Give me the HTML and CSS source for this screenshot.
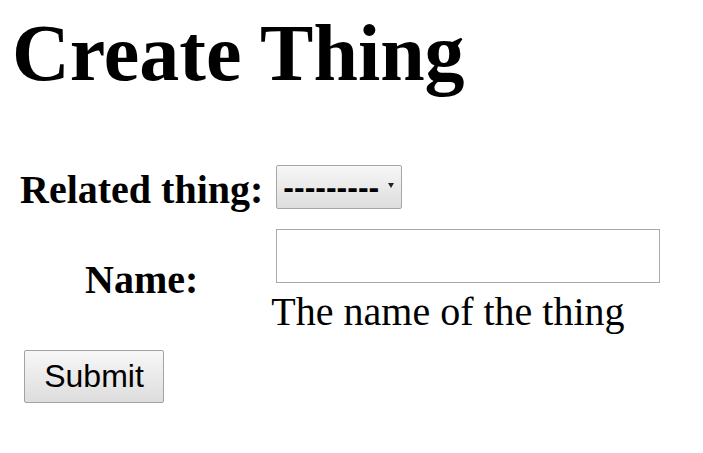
FILE: index.html
```html
<!DOCTYPE html>
<html>
<head>
<meta charset="utf-8">
<title>Create Thing</title>
<link rel="stylesheet" href="styles.css">
</head>
<body>
<h1 class="title">Create Thing</h1>
<form class="form">
  <table class="fields">
    <tr class="row row-related">
      <th class="label-cell"><label for="id_related">Related thing:</label></th>
      <td class="field-cell">
        <span class="select-wrap">
          <select id="id_related" class="select">
            <option>---------</option>
          </select>
        </span>
      </td>
    </tr>
    <tr class="row row-name">
      <th class="label-cell"><label for="id_name">Name:</label></th>
      <td class="field-cell">
        <input id="id_name" class="text-input" type="text">
        <span class="helptext">The name of the thing</span>
      </td>
    </tr>
  </table>
  <input class="submit" type="submit" value="Submit">
</form>
</body>
</html>
```

FILE: styles.css
```css
body {
  margin: 8px;
  font-family: "Liberation Serif", "Times New Roman", serif;
  font-size: 40px;
  color: #000;
  background: #fff;
}

.title {
  margin: 0 0 65px;
  padding-left: 4px;
  font-size: 80px;
  line-height: 90px;
  font-weight: bold;
}

.form {
  margin: 0;
}

.fields {
  border-collapse: separate;
  border-spacing: 0;
}

.label-cell {
  width: 243px;
  padding: 0 10px 0 12px;
  text-align: center;
  vertical-align: middle;
  font-weight: bold;
  line-height: 46px;
  white-space: nowrap;
}

.row-related .label-cell {
  padding-top: 2px;
}

.field-cell {
  padding: 0;
  vertical-align: top;
}

.row-related .field-cell {
  padding: 2px 0 5px;
}

.row-name .field-cell {
  padding: 15px 0 10px;
}

.select-wrap {
  position: relative;
  display: block;
  width: 126px;
  margin-left: 3px;
}

.select-wrap::after {
  content: "";
  position: absolute;
  left: 112px;
  top: 18px;
  border-left: 3px solid transparent;
  border-right: 3px solid transparent;
  border-top: 5px solid #222;
}

.select {
  display: block;
  -webkit-appearance: none;
  appearance: none;
  box-sizing: border-box;
  width: 126px;
  height: 44px;
  margin: 0;
  padding: 0 0 0 6px;
  border: 1px solid #a6a6a6;
  border-radius: 2px;
  background: linear-gradient(#f7f7f7, #dddddd);
  font-family: "Liberation Sans", Arial, sans-serif;
  font-size: 32px;
  font-weight: bold;
  color: #000;
}

.text-input {
  display: block;
  box-sizing: border-box;
  width: 384px;
  height: 54px;
  margin: 0 0 6px 3px;
  padding: 0 4px;
  border: 1px solid #a9a9a9;
  border-radius: 0;
  background: #fff;
  font-family: "Liberation Sans", Arial, sans-serif;
  font-size: 32px;
}

.helptext {
  display: block;
  margin-left: -2px;
  line-height: 46px;
}

.submit {
  display: block;
  box-sizing: border-box;
  width: 140px;
  height: 53px;
  margin: 5px 0 0 16px;
  padding: 0;
  border: 1px solid #a3a3a3;
  border-radius: 2px;
  background: linear-gradient(#f7f7f7, #dddddd);
  font-family: "Liberation Sans", Arial, sans-serif;
  font-size: 32px;
  color: #000;
}
```
